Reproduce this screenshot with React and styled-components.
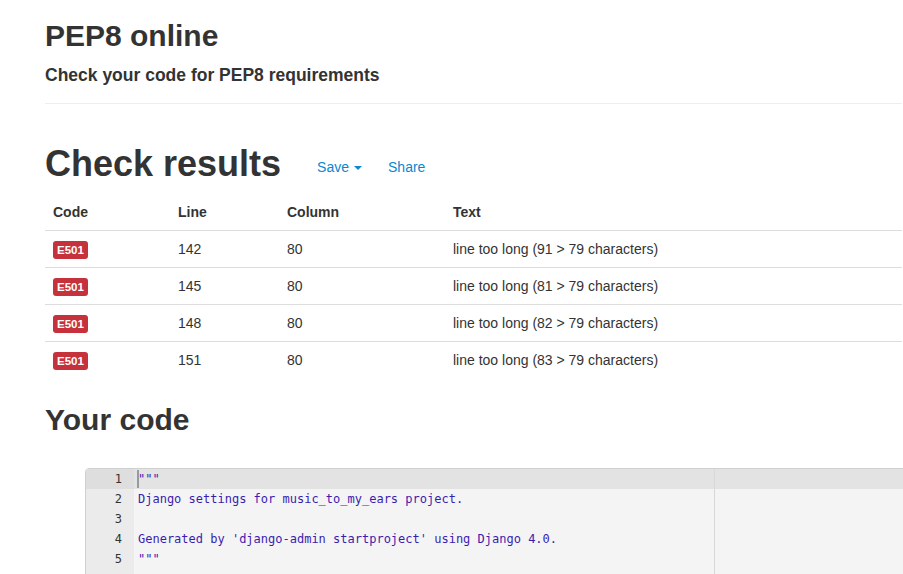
import React from "react";
import styled, { createGlobalStyle } from "styled-components";

const GlobalStyle = createGlobalStyle`
  html, body {
    margin: 0;
    padding: 0;
    background: #fff;
    overflow: hidden;
  }
  body {
    font-family: "Liberation Sans", Helvetica, Arial, sans-serif;
    color: #333;
    font-size: 14px;
    line-height: 20px;
  }
`;

const results = [
  { code: "E501", line: 142, column: 80, text: "line too long (91 > 79 characters)" },
  { code: "E501", line: 145, column: 80, text: "line too long (81 > 79 characters)" },
  { code: "E501", line: 148, column: 80, text: "line too long (82 > 79 characters)" },
  { code: "E501", line: 151, column: 80, text: "line too long (83 > 79 characters)" },
];

const source = [
  '"""',
  "Django settings for music_to_my_ears project.",
  "",
  "Generated by 'django-admin startproject' using Django 4.0.",
  '"""',
  "",
];

const App = () => {
  return (
    <S.Page>
      <GlobalStyle />
      <S.Container>
        <S.Title>PEP8 online</S.Title>
        <S.Subtitle>Check your code for PEP8 requirements</S.Subtitle>
        <S.Rule />

        <S.ResultsHead>
          <S.BigTitle>Check results</S.BigTitle>
          <S.Links>
            <S.Link href="#">
              Save <S.Caret />
            </S.Link>
            <S.Link href="#">Share</S.Link>
          </S.Links>
        </S.ResultsHead>

        <S.Table>
          <thead>
            <tr>
              <S.Th $w={125}>Code</S.Th>
              <S.Th $w={109}>Line</S.Th>
              <S.Th $w={166}>Column</S.Th>
              <S.Th>Text</S.Th>
            </tr>
          </thead>
          <tbody>
            {results.map((r, i) => (
              <S.Row key={r.line} $first={i === 0}>
                <S.Td>
                  <S.Badge>{r.code}</S.Badge>
                </S.Td>
                <S.Td>{r.line}</S.Td>
                <S.Td>{r.column}</S.Td>
                <S.Td>{r.text}</S.Td>
              </S.Row>
            ))}
          </tbody>
        </S.Table>

        <S.Title $top={22}>Your code</S.Title>
      </S.Container>

      <S.Editor>
        <S.Gutter>
          {source.map((_, i) => (
            <S.LineNo key={i} $active={i === 0}>
              {i + 1}
            </S.LineNo>
          ))}
        </S.Gutter>
        <S.Lines>
          {source.map((l, i) => (
            <S.CodeLine key={i} $active={i === 0}>
              {i === 0 && <S.Cursor />}
              {l || "\u00a0"}
            </S.CodeLine>
          ))}
          <S.PrintMargin />
        </S.Lines>
      </S.Editor>
    </S.Page>
  );
};

const S = {
  Page: styled.div`
    height: 574px;
    overflow: hidden;
    padding-top: 16px;
  `,
  Container: styled.div`
    width: 857px;
    margin-left: 45px;
  `,
  Title: styled.h2`
    margin: ${(p) => p.$top || 0}px 0 0;
    font-size: 30px;
    line-height: 40px;
    font-weight: 700;
    color: #333;
  `,
  Subtitle: styled.h4`
    margin: 9px 0 0;
    font-size: 17.5px;
    line-height: 20px;
    font-weight: 700;
    color: #333;
  `,
  Rule: styled.hr`
    margin: 18px 0 0;
    border: 0;
    border-top: 1px solid #eee;
  `,
  ResultsHead: styled.div`
    display: flex;
    align-items: flex-end;
    margin-top: 40px;
  `,
  BigTitle: styled.h1`
    margin: 0;
    font-size: 36px;
    line-height: 40px;
    font-weight: 700;
    color: #333;
  `,
  Links: styled.div`
    display: flex;
    gap: 26px;
    margin-left: 36px;
    padding-bottom: 7px;
  `,
  Link: styled.a`
    display: flex;
    align-items: center;
    color: #0a88cf;
    text-decoration: none;
    font-size: 14px;
    line-height: 20px;
  `,
  Caret: styled.span`
    display: inline-block;
    width: 0;
    height: 0;
    margin-left: 5px;
    margin-top: 2px;
    border-top: 4px solid #0a88cf;
    border-left: 4px solid transparent;
    border-right: 4px solid transparent;
  `,
  Table: styled.table`
    width: 100%;
    margin-top: 10px;
    border-collapse: collapse;
    border-spacing: 0;
  `,
  Th: styled.th`
    width: ${(p) => (p.$w ? `${p.$w - 16}px` : "auto")};
    padding: 8px;
    text-align: left;
    font-weight: 700;
    line-height: 20px;
    border-bottom: 1px solid #ddd;
  `,
  Row: styled.tr`
    border-top: ${(p) => (p.$first ? "0" : "1px solid #ddd")};
  `,
  Td: styled.td`
    padding: 8px;
    line-height: 20px;
    vertical-align: top;
  `,
  Badge: styled.span`
    display: inline-block;
    padding: 2px 4px;
    font-size: 11.5px;
    line-height: 14px;
    font-weight: 700;
    color: #fff;
    background: #c6323c;
    border-radius: 3px;
    vertical-align: baseline;
  `,
  Editor: styled.div`
    display: flex;
    margin: 28px 0 0 85px;
    width: 860px;
    border: 1px solid #d0d0d0;
    border-radius: 4px 0 0 0;
    background: #f4f4f4;
    overflow: hidden;
    font-family: "DejaVu Sans Mono", "Liberation Mono", monospace;
    font-size: 12px;
  `,
  Gutter: styled.div`
    width: 48px;
    flex: none;
    background: #ebebeb;
  `,
  LineNo: styled.div`
    height: 20px;
    line-height: 20px;
    padding-right: 12px;
    text-align: right;
    color: #333;
    background: ${(p) => (p.$active ? "#dedede" : "transparent")};
  `,
  Lines: styled.div`
    position: relative;
    flex: 1;
  `,
  PrintMargin: styled.div`
    position: absolute;
    top: 0;
    bottom: 0;
    left: 580px;
    width: 1px;
    background: #d8d8d8;
  `,
  CodeLine: styled.div`
    position: relative;
    height: 20px;
    line-height: 20px;
    padding-left: 4px;
    white-space: pre;
    color: #3a1db0;
    background: ${(p) => (p.$active ? "#e3e3e3" : "transparent")};
  `,
  Cursor: styled.span`
    position: absolute;
    left: 3px;
    top: 1px;
    width: 2px;
    height: 18px;
    background: #9a9a9a;
  `,
};

export default App;
